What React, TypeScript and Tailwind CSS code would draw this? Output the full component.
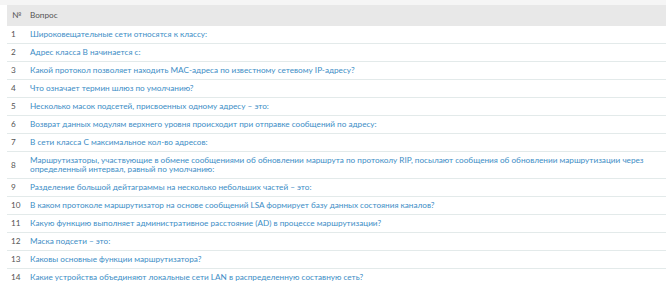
const questions: string[][] = [
  ["Широковещательные сети относятся к классу:"],
  ["Адрес класса В начинается с:"],
  ["Какой протокол позволяет находить MAC-адреса по известному сетевому IP-адресу?"],
  ["Что означает термин шлюз по умолчанию?"],
  ["Несколько масок подсетей, присвоенных одному адресу – это:"],
  ["Возврат данных модулям верхнего уровня происходит при отправке сообщений по адресу:"],
  ["В сети класса С максимальное кол-во адресов:"],
  [
    "Маршрутизаторы, участвующие в обмене сообщениями об обновлении маршрута по протоколу RIP, посылают сообщения об обновлении маршрутизации через",
    "определенный интервал, равный по умолчанию:",
  ],
  ["Разделение большой дейтаграммы на несколько небольших частей – это:"],
  ["В каком протоколе маршрутизатор на основе сообщений LSA формирует базу данных состояния каналов?"],
  ["Какую функцию выполняет административное расстояние (AD) в процессе маршрутизации?"],
  ["Маска подсети – это:"],
  ["Каковы основные функции маршрутизатора?"],
  ["Какие устройства объединяют локальные сети LAN в распределенную составную сеть?"],
];

export default function App() {
  return (
    <div className="w-[666px] h-[285px] overflow-hidden bg-white font-['Lato',sans-serif] text-[8.2px] leading-[9px]">
      <div className="h-[5px] bg-[#f5f5f5]" />
      <table className="ml-[7px] w-[659px] border-collapse">
        <thead>
          <tr className="bg-[#e8e8e8] text-[#555]">
            <th className="w-[19px] pl-[5px] h-[21px] text-left font-normal">№</th>
            <th className="pl-[4px] text-left font-normal">Вопрос</th>
          </tr>
        </thead>
        <tbody>
          {questions.map((lines, i) => (
            <tr key={i} className="border-b border-[#e3eaea]">
              <td className="w-[19px] pl-[4px] py-[4px] align-middle text-[#555]">{i + 1}</td>
              <td className="pl-[4px] py-[4px] text-[#3d8ec6] whitespace-nowrap">
                {lines.map((l, j) => (
                  <div key={j}>{l}</div>
                ))}
              </td>
            </tr>
          ))}
        </tbody>
      </table>
    </div>
  );
}
